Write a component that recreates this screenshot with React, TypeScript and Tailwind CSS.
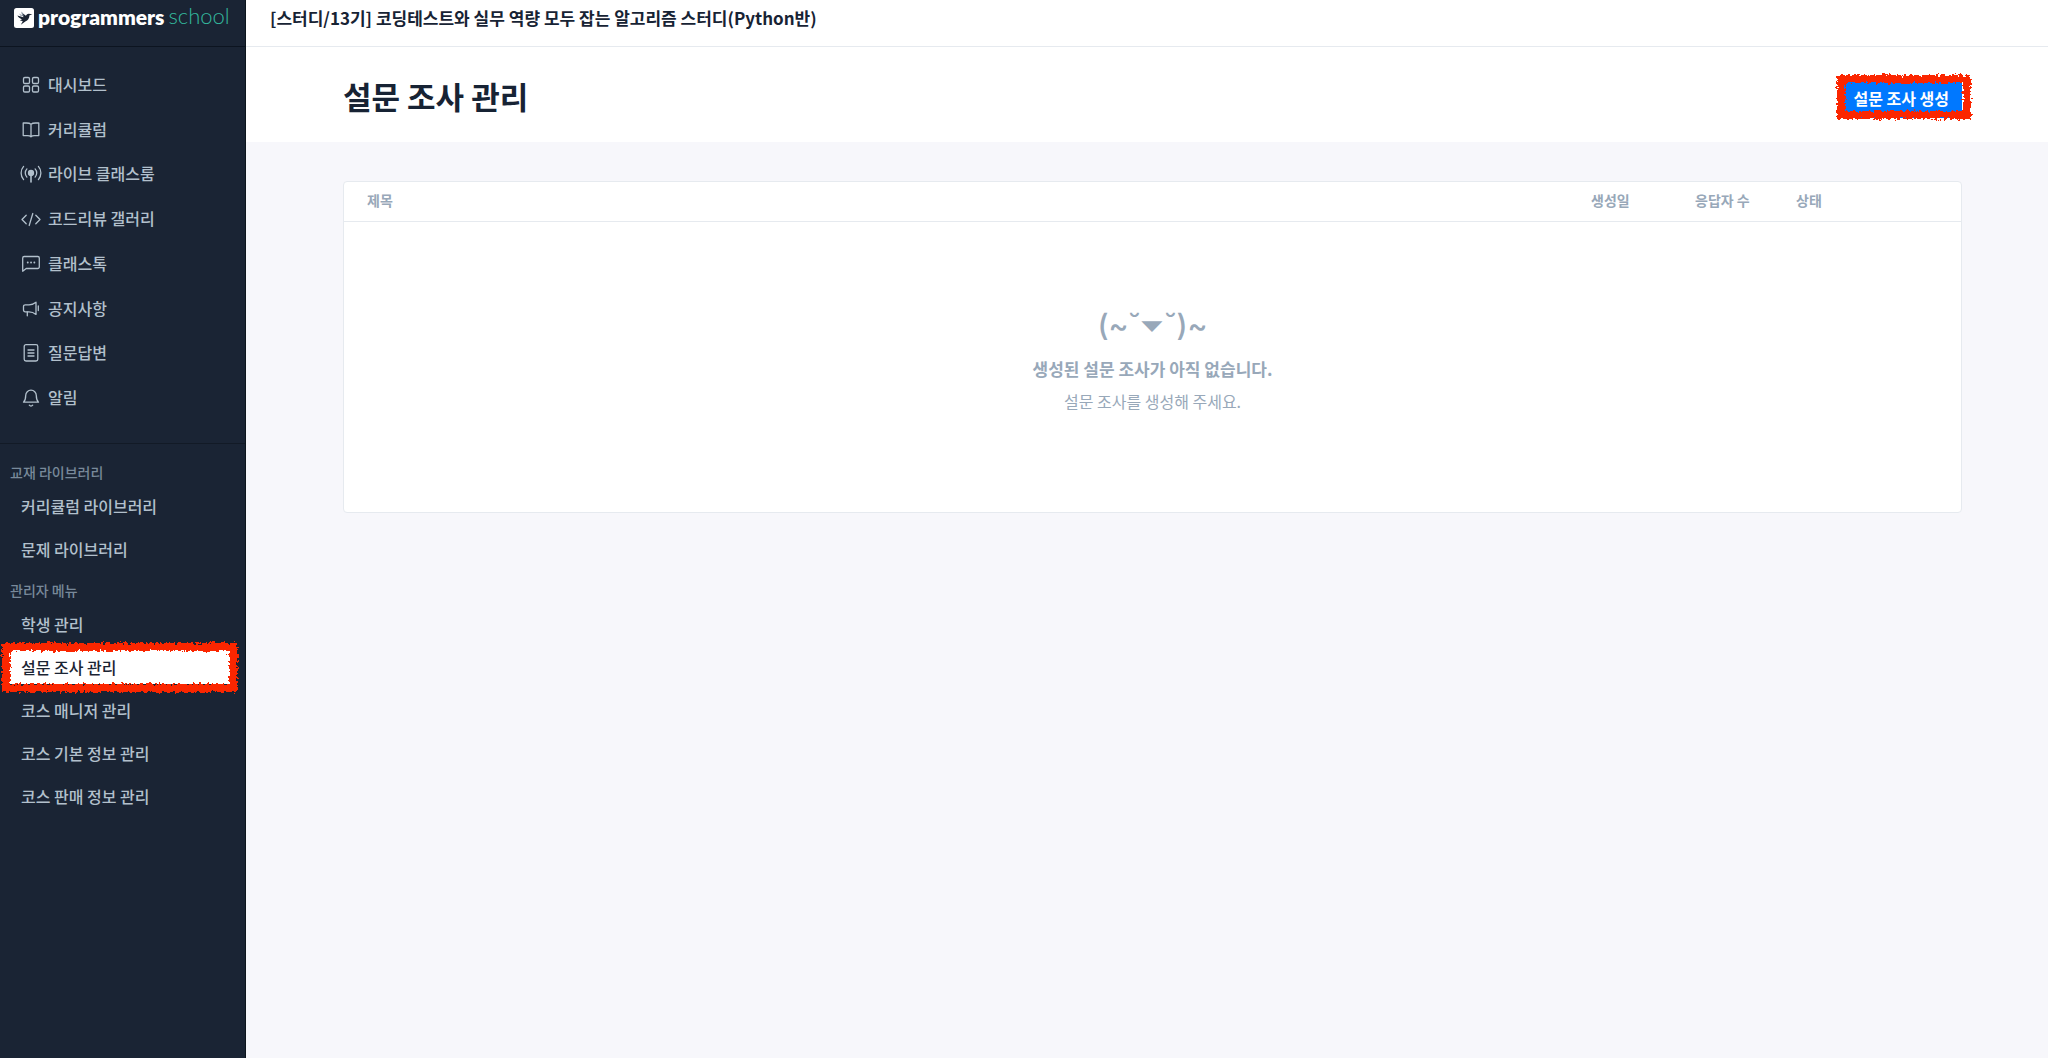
import type { ReactNode } from "react";

interface NavItem {
  label: string;
  icon: ReactNode;
}

interface MenuGroup {
  title: string;
  items: string[];
}

function Icon({ children }: { children: ReactNode }) {
  return (
    <svg
      viewBox="0 0 22 22"
      className="w-[22px] h-[22px] mt-0.5 shrink-0"
      fill="none"
      stroke="currentColor"
      strokeWidth="1.3"
      strokeLinecap="round"
      strokeLinejoin="round"
      aria-hidden="true"
    >
      {children}
    </svg>
  );
}

const navItems: NavItem[] = [
  {
    label: "대시보드",
    icon: (
      <Icon>
        <rect x="3.5" y="3.5" width="6" height="6" rx="1.3" />
        <rect x="12.5" y="3.5" width="6" height="6" rx="1.3" />
        <rect x="3.5" y="12" width="6" height="6" rx="1.3" />
        <rect x="12.5" y="12" width="6" height="6" rx="1.3" />
      </Icon>
    ),
  },
  {
    label: "커리큘럼",
    icon: (
      <Icon>
        <path d="M11 5.2C9.8 4.2 8.5 4 6.5 4H3.2v12.6h4.3c1.8 0 2.8.3 3.5 1.2.7-.9 1.7-1.2 3.5-1.2h4.3V4h-3.3c-2 0-3.3.2-4.5 1.2zM11 5.2v12.6" />
      </Icon>
    ),
  },
  {
    label: "라이브 클래스룸",
    icon: (
      <Icon>
        <circle cx="11" cy="10" r="2.5" fill="currentColor" />
        <path d="M11 12v7" strokeWidth="1.6" />
        <path d="M6.9 5.9a6 6 0 0 0 0 8.2M15.1 5.9a6 6 0 0 1 0 8.2M3.6 3.4a10 10 0 0 0 0 13.2M18.4 3.4a10 10 0 0 1 0 13.2" />
      </Icon>
    ),
  },
  {
    label: "코드리뷰 갤러리",
    icon: (
      <Icon>
        <path d="M6.2 7.2 2 11.5l4.2 4.3M15.8 7.2l4.2 4.3-4.2 4.3M12.8 5.5l-3.6 12" />
      </Icon>
    ),
  },
  {
    label: "클래스톡",
    icon: (
      <Icon>
        <path d="M4.2 3.5h13.6a1.5 1.5 0 0 1 1.5 1.5v9a1.5 1.5 0 0 1-1.5 1.5H6.2L2.7 18.2V5a1.5 1.5 0 0 1 1.5-1.5z" />
        <path d="M7.7 9.5h.1M11 9.5h.1M14.3 9.5h.1" strokeWidth="1.8" />
      </Icon>
    ),
  },
  {
    label: "공지사항",
    icon: (
      <Icon>
        <path d="M16 4.2v12.2c-2.3-1.9-4.3-2.6-7-2.6H5.2a1.7 1.7 0 0 1-1.7-1.7V8.5a1.7 1.7 0 0 1 1.7-1.7H9c2.7 0 4.7-.7 7-2.6z" />
        <path d="M7.3 13.8v4M18.3 8v4.6" />
      </Icon>
    ),
  },
  {
    label: "질문답변",
    icon: (
      <Icon>
        <rect x="4.2" y="2.7" width="13.6" height="16.3" rx="1.8" />
        <path d="M8 8h6M8 11h6M8 14h6" />
      </Icon>
    ),
  },
  {
    label: "알림",
    icon: (
      <Icon>
        <path d="M3.5 15.2c1.9-1.7 2.2-4 2.2-6.7a5.3 5.3 0 0 1 10.6 0c0 2.7.3 5 2.2 6.7z" />
        <path d="M9.3 18.2c.9 1.1 2.5 1.1 3.4 0" />
      </Icon>
    ),
  },
];

const menuGroups: MenuGroup[] = [
  { title: "교재 라이브러리", items: ["커리큘럼 라이브러리", "문제 라이브러리"] },
  {
    title: "관리자 메뉴",
    items: ["학생 관리", "설문 조사 관리", "코스 매니저 관리", "코스 기본 정보 관리", "코스 판매 정보 관리"],
  },
];

const activeItem = "설문 조사 관리";

// rough crayon outline drawn over a highlighted control
function CrayonFrame({ id, className }: { id: string; className: string }) {
  return (
    <svg className={`absolute pointer-events-none overflow-visible ${className}`} aria-hidden="true">
      <filter id={id} x="-10%" y="-30%" width="120%" height="160%">
        <feTurbulence type="fractalNoise" baseFrequency="0.32" numOctaves="3" seed="6" result="noise" />
        <feDisplacementMap in="SourceGraphic" in2="noise" scale="7" xChannelSelector="R" yChannelSelector="G" />
      </filter>
      <rect width="100%" height="100%" fill="none" stroke="#fb2500" strokeWidth="8" filter={`url(#${id})`} />
    </svg>
  );
}

function Logo() {
  return (
    <a href="#" className="flex items-center gap-1 h-9 pl-[14px]" aria-label="programmers school">
      <svg viewBox="0 0 20 20" className="w-5 h-5" aria-hidden="true">
        <rect width="20" height="20" rx="2.5" fill="#fff" />
        <path
          d="M3.4 7.6 9.3 9.3 8.3 5l3.6 2.7c.7-1.4 1.7-2.1 3.1-2l3.4.7-2.9.8c-.3 3.2-1.5 5.2-4.2 6.3L6.8 16.8l2-3.6-3-.9 2.2-.9c-2.2-.8-3.7-2-4.6-3.8z"
          fill="#1b2433"
        />
        <path d="M5.2 5.6 8 7.6 7.3 3.6l1.6 1.3.8 3.5-3.5-.9z" fill="#8793a1" />
      </svg>
      <span className="-mt-0.5 font-['Lato'] text-white text-[21px] leading-6 font-extrabold">programmers</span>
      <span className="-mt-1 font-['Lato'] text-[#33b89d] text-[22px] leading-6 font-light">school</span>
    </a>
  );
}

function Sidebar() {
  return (
    <aside className="w-[246px] shrink-0 bg-[#1a2434] border-r border-[#0c151c] text-[#b2c0cc]">
      <div className="h-[47px] border-b border-[#0c1420]">
        <Logo />
      </div>
      <nav>
        <ul className="flex flex-col justify-between h-[397px] pt-[17px] pb-[26px] border-b border-[#121a26]">
          {navItems.map((item) => (
            <li key={item.label}>
              <a href="#" className="flex items-center gap-1.5 h-10 pl-5 text-base font-medium">
                {item.icon}
                {item.label}
              </a>
            </li>
          ))}
        </ul>
        <div className="flex flex-col gap-2 pt-4">
          {menuGroups.map((group) => (
            <section key={group.title}>
              <h2 className="pl-[10px] h-6 text-sm leading-6 font-medium text-[#78899a]">{group.title}</h2>
              <ul>
                {group.items.map((name) => (
                  <li key={name} className="h-[43px] py-1 pl-[9px] pr-[15px]">
                    <a
                      href="#"
                      className={`relative flex items-center h-[35px] pl-3 text-base font-medium ${
                        name === activeItem ? "bg-white text-[#1b2433]" : ""
                      }`}
                    >
                      {name}
                      {name === activeItem && (
                        <CrayonFrame id="crayon-menu" className="-left-[3px] -top-[2px] w-[227px] h-[41px]" />
                      )}
                    </a>
                  </li>
                ))}
              </ul>
            </section>
          ))}
        </div>
      </nav>
    </aside>
  );
}

export default function App() {
  return (
    <div className="flex min-h-screen bg-[#f7f7fb] font-['Noto_Sans_CJK_KR',sans-serif] text-[#172334]">
      <Sidebar />
      <div className="flex-1 min-w-0">
        <header className="h-[47px] pl-6 bg-white border-b border-[#e6eaef]">
          <p className="text-[17px] leading-9 font-bold">
            [스터디/13기] 코딩테스트와 실무 역량 모두 잡는 알고리즘 스터디(Python반)
          </p>
        </header>
        <div className="flex items-center justify-between h-[95px] pt-[3px] pl-[97px] pr-[86px] bg-white">
          <h1 className="text-[31px] leading-10 font-bold">설문 조사 관리</h1>
          <button
            type="button"
            className="relative mt-1 h-10 px-[13px] rounded bg-[#0078ff] text-white text-base font-bold"
          >
            설문 조사 생성
            <CrayonFrame id="crayon-button" className="left-px top-px w-[126px] h-[36px]" />
          </button>
        </div>
        <main className="pt-[39px] pl-[97px] pr-[86px]">
          <div className="bg-white border border-[#e6eaef] rounded">
            <table className="w-full table-fixed text-left">
              <thead className="text-sm text-[#98a8b9]">
                <tr className="h-[39px] border-b border-[#e6eaef]">
                  <th className="pl-[23px] pb-0.5 font-bold">제목</th>
                  <th className="w-[104px] pb-0.5 font-bold">생성일</th>
                  <th className="w-[101px] pb-0.5 font-bold">응답자 수</th>
                  <th className="w-[165px] pb-0.5 font-bold">상태</th>
                </tr>
              </thead>
              <tbody>
                <tr>
                  <td colSpan={4} className="h-[291px] pb-[20px] text-center text-[#98a8b9]">
                    <p className="font-['Inter','DejaVu_Sans',sans-serif] text-[30px] leading-[48px] font-medium">
                      (~˘⏷˘)~
                    </p>
                    <p className="mt-1.5 text-[17px] leading-7 font-bold">생성된 설문 조사가 아직 없습니다.</p>
                    <p className="mt-1.5 text-base leading-6">설문 조사를 생성해 주세요.</p>
                  </td>
                </tr>
              </tbody>
            </table>
          </div>
        </main>
      </div>
    </div>
  );
}
